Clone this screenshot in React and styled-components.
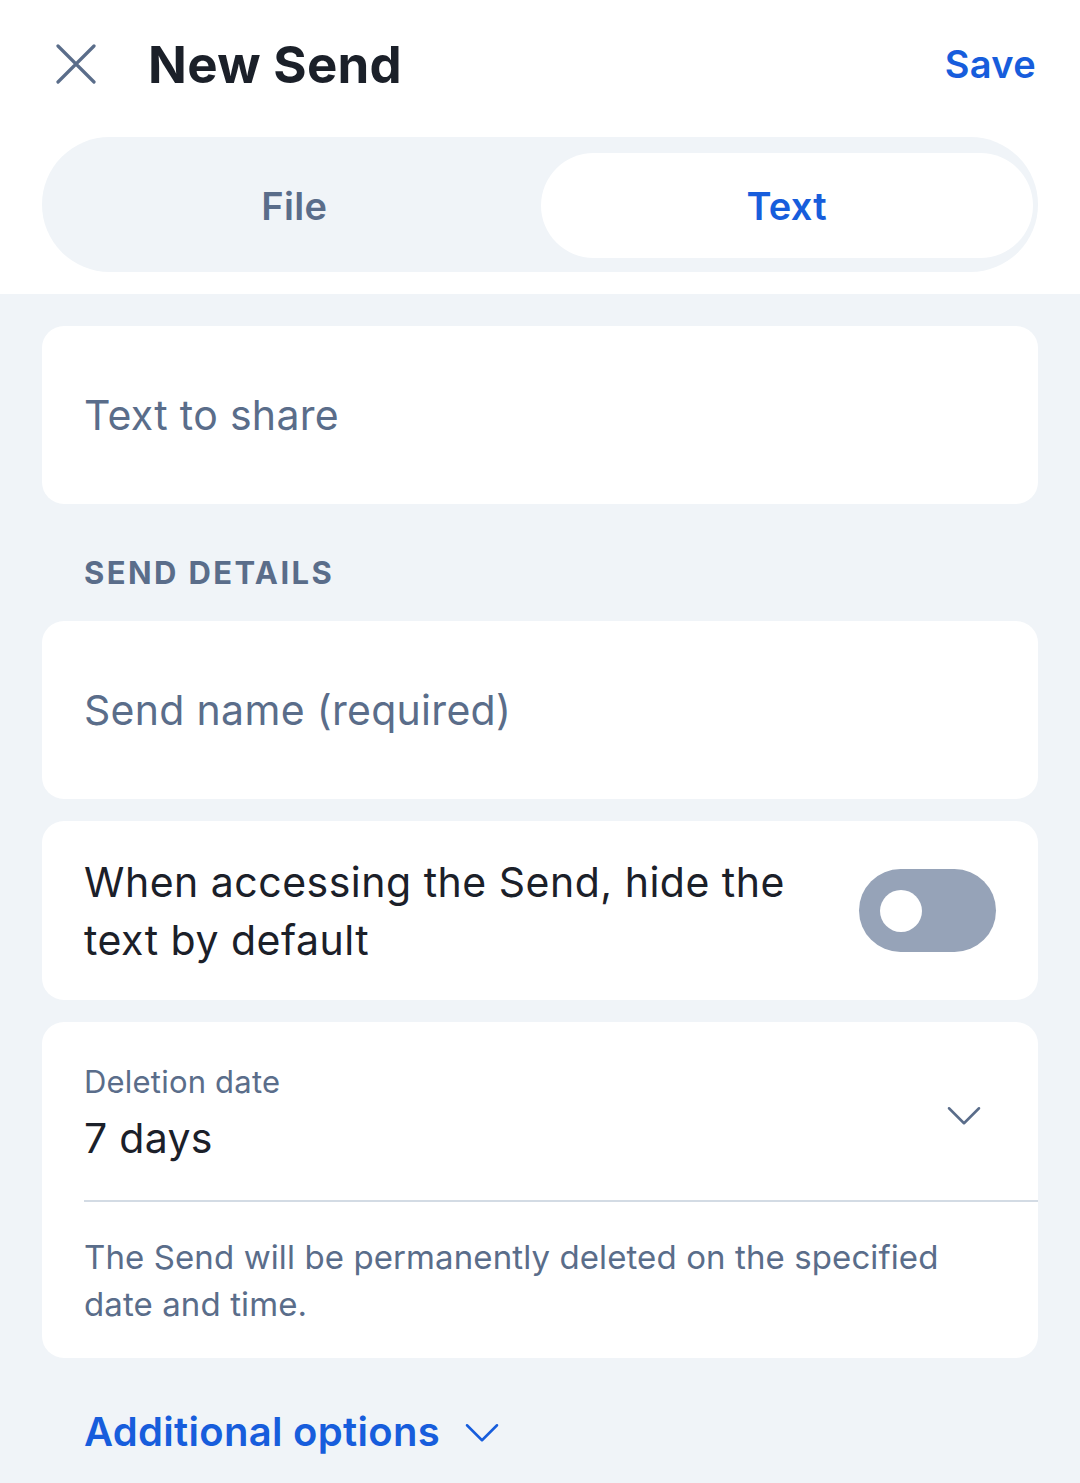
import styled, { createGlobalStyle } from "styled-components";

const GlobalStyle = createGlobalStyle`
  body {
    margin: 0;
    background: #f0f4f8;
    font-family: "Inter", "Roboto", sans-serif;
  }
`;

const Page = styled.div`
  width: 1080px;
  min-height: 1483px;
  background: #f0f4f8;
`;

const Header = styled.div`
  background: #ffffff;
  padding: 0 42px 22px;
`;

const TopBar = styled.div`
  height: 128px;
  display: flex;
  align-items: center;
  padding: 0 0 0 14px;
`;

const IconButton = styled.button`
  border: none;
  background: none;
  padding: 0;
  width: 40px;
  height: 40px;
  display: flex;
  align-items: center;
  justify-content: center;
  color: #5a6d8a;
  cursor: pointer;
`;

const Title = styled.h1`
  margin: 0 0 0 52px;
  font-size: 51px;
  font-weight: 700;
  color: #1b2029;
  letter-spacing: 0.3px;
  flex: 1;
`;

const SaveButton = styled.button`
  border: none;
  background: none;
  padding: 0;
  font-family: inherit;
  font-size: 38px;
  font-weight: 600;
  color: #175ddc;
  letter-spacing: 0.3px;
  margin-right: 2px;
`;

const Segmented = styled.div`
  display: flex;
  background: #f0f4f8;
  border-radius: 68px;
  height: 135px;
  padding: 16px 5px 14px 0;
  box-sizing: border-box;
  margin-top: 9px;
`;

const Segment = styled.div`
  flex: 1;
  display: flex;
  align-items: center;
  justify-content: center;
  border-radius: 53px;
  font-size: 38px;
  font-weight: 600;
  letter-spacing: 0.3px;
  padding-left: ${({ active }) => (active ? 0 : 6)}px;
  background: ${({ active }) => (active ? "#ffffff" : "transparent")};
  color: ${({ active }) => (active ? "#175ddc" : "#5a6d8a")};
`;

const Body = styled.div`
  padding: 32px 42px 0;
  display: flex;
  flex-direction: column;
`;

const Card = styled.div`
  background: #ffffff;
  border-radius: 22px;
  margin-bottom: ${({ gap }) => gap || 22}px;
`;

const InputCard = styled(Card)`
  height: 178px;
  display: flex;
  align-items: center;
  padding: 0 42px;
`;

const Placeholder = styled.div`
  font-size: 41px;
  letter-spacing: 0.3px;
  color: #5a6d8a;
`;

const SectionTitle = styled.div`
  font-size: 31px;
  font-weight: 700;
  letter-spacing: 2.4px;
  color: #5a6d8a;
  padding: 28px 42px 30px;
`;

const ToggleCard = styled(Card)`
  height: 179px;
  display: flex;
  align-items: center;
  justify-content: space-between;
  padding: 0 42px;
`;

const ToggleLabel = styled.div`
  font-size: 41px;
  letter-spacing: 0.5px;
  line-height: 58px;
  color: #1b2029;
  max-width: 730px;
`;

const Switch = styled.div`
  width: 137px;
  height: 83px;
  border-radius: 42px;
  background: #96a3b8;
  display: flex;
  align-items: center;
  padding-left: 21px;
  box-sizing: border-box;
  flex-shrink: 0;
`;

const Knob = styled.div`
  width: 42px;
  height: 42px;
  border-radius: 50%;
  background: #ffffff;
`;

const SelectRow = styled.div`
  display: flex;
  align-items: center;
  justify-content: space-between;
  padding: 40px 56px 33px 0;
  border-bottom: 2px solid #d3dbe4;
  margin-left: 42px;
`;

const SelectLabel = styled.div`
  font-size: 31px;
  letter-spacing: 0.2px;
  color: #5a6d8a;
  line-height: 40px;
  margin-bottom: 7px;
`;

const SelectValue = styled.div`
  font-size: 41px;
  letter-spacing: 0.3px;
  color: #1b2029;
  line-height: 58px;
`;

const Helper = styled.div`
  font-size: 33px;
  letter-spacing: 0.1px;
  line-height: 47px;
  color: #5a6d8a;
  padding: 32px 42px 30px;
`;

const MoreButton = styled.div`
  display: flex;
  align-items: center;
  gap: 24px;
  padding: 27px 42px 31px;
  font-size: 40px;
  font-weight: 600;
  letter-spacing: 0.3px;
  color: #175ddc;
`;

const Chevron = ({ color, size = 36 }) => (
  <svg width={size} height={size} viewBox="0 0 24 24" fill="none" stroke={color} strokeWidth="1.7" strokeLinecap="round" strokeLinejoin="round">
    <path d="M2 7.5l10 10 10-10" />
  </svg>
);

export default function App() {
  return (
    <Page>
      <GlobalStyle />
      <Header>
        <TopBar>
          <IconButton aria-label="Close">
            <svg width="40" height="40" viewBox="0 0 40 40" fill="none" stroke="#5a6d8a" strokeWidth="3.2" strokeLinecap="round">
              <path d="M2 2l36 36M38 2L2 38" />
            </svg>
          </IconButton>
          <Title>New Send</Title>
          <SaveButton>Save</SaveButton>
        </TopBar>
        <Segmented>
          <Segment>File</Segment>
          <Segment active>Text</Segment>
        </Segmented>
      </Header>
      <Body>
        <InputCard>
          <Placeholder>Text to share</Placeholder>
        </InputCard>
        <SectionTitle>SEND DETAILS</SectionTitle>
        <InputCard>
          <Placeholder>Send name (required)</Placeholder>
        </InputCard>
        <ToggleCard>
          <ToggleLabel>When accessing the Send, hide the text by default</ToggleLabel>
          <Switch>
            <Knob />
          </Switch>
        </ToggleCard>
        <Card gap={0}>
          <SelectRow>
            <div>
              <SelectLabel>Deletion date</SelectLabel>
              <SelectValue>7 days</SelectValue>
            </div>
            <Chevron color="#5a6d8a" />
          </SelectRow>
          <Helper>The Send will be permanently deleted on the specified date and time.</Helper>
        </Card>
        <MoreButton>
          Additional options
          <Chevron color="#175ddc" />
        </MoreButton>
      </Body>
    </Page>
  );
}
